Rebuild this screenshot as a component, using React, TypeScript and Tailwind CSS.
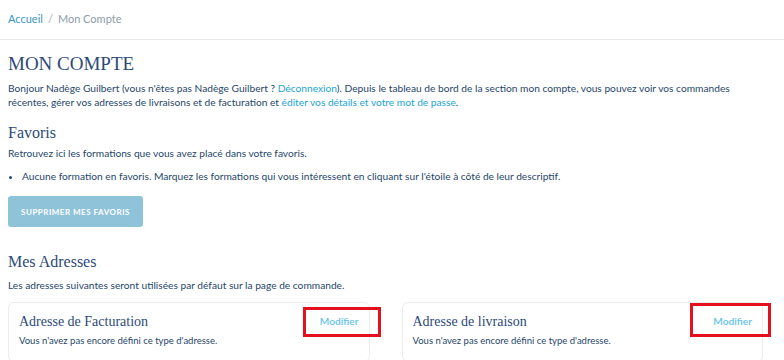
export default function App() {
  const sans = "font-['Lato','Open_Sans',sans-serif]";
  const serif = "font-['Liberation_Serif','DejaVu_Serif',serif]";

  return (
    <div className={`min-h-[360px] w-[784px] bg-white ${sans} text-[#26466b]`}>
      <nav className="flex h-[40px] items-center gap-[5px] border-b border-[#e8e8e8] px-[8px] text-[11px]">
        <a className="text-[#3b95c4]">Accueil</a>
        <span className="text-[#9aa6b2]">/</span>
        <span className="text-[#8e9cab]">Mon Compte</span>
      </nav>

      <main className="w-[771px] px-[8px] pt-[11px]">
        <h1 className={`${serif} text-[19px] leading-[26px] text-[#2c4a7a]`}>MON COMPTE</h1>
        <p className="mt-[4px] max-w-[740px] text-[10.2px] leading-[14px]">
          Bonjour Nadège Guilbert (vous n'êtes pas Nadège Guilbert ?{" "}
          <a className="text-[#1aa5d3]">Déconnexion</a>). Depuis le tableau de bord de la section mon compte, vous
          pouvez voir vos commandes récentes, gérer vos adresses de livraisons et de facturation et{" "}
          <a className="text-[#1aa5d3]">éditer vos détails et votre mot de passe</a>.
        </p>

        <h2 className={`${serif} mt-[13px] text-[16px] leading-[22px] text-[#2c4a7a]`}>Favoris</h2>
        <p className="mt-[2px] text-[10.2px] leading-[14px]">
          Retrouvez ici les formations que vous avez placé dans votre favoris.
        </p>
        <ul className="mt-[9px] list-disc pl-[14px] text-[10.2px] leading-[14px]">
          <li>
            Aucune formation en favoris. Marquez les formations qui vous intéressent en cliquant sur l'étoile à côté de
            leur descriptif.
          </li>
        </ul>

        <button className="mt-[13px] h-[31px] w-[135px] rounded-[3px] bg-[#8fc3da] text-[8px] font-bold tracking-[0.5px] text-white">
          SUPPRIMER MES FAVORIS
        </button>

        <h2 className={`${serif} mt-[24px] text-[16px] leading-[22px] text-[#2c4a7a]`}>Mes Adresses</h2>
        <p className="mt-[5px] text-[10.2px] leading-[14px]">
          Les adresses suivantes seront utilisées par défaut sur la page de commande.
        </p>

        <div className="mt-[10px] grid grid-cols-2 gap-[32px]">
          {[
            { title: "Adresse de Facturation", box: "left-[294px] top-[4px] h-[30px] w-[78px]" },
            { title: "Adresse de livraison", box: "left-[287px] top-[0px] h-[34px] w-[81px]" },
          ].map((c) => (
            <section key={c.title} className="relative h-[60px] rounded-[6px] border border-[#ececec] px-[10px] pt-[10px]">
              <div className="flex items-center justify-between">
                <h3 className={`${serif} text-[14px] leading-[18px] text-[#2c4a7a]`}>{c.title}</h3>
                <a className="text-[10.2px] font-semibold text-[#62c3ec]">Modifier</a>
              </div>
              <p className="mt-[3px] text-[9.5px] leading-[13px]">Vous n'avez pas encore défini ce type d'adresse.</p>
              <div className={`absolute ${c.box} border-[3px] border-[#e3101e]`} />
            </section>
          ))}
        </div>
      </main>
    </div>
  );
}
